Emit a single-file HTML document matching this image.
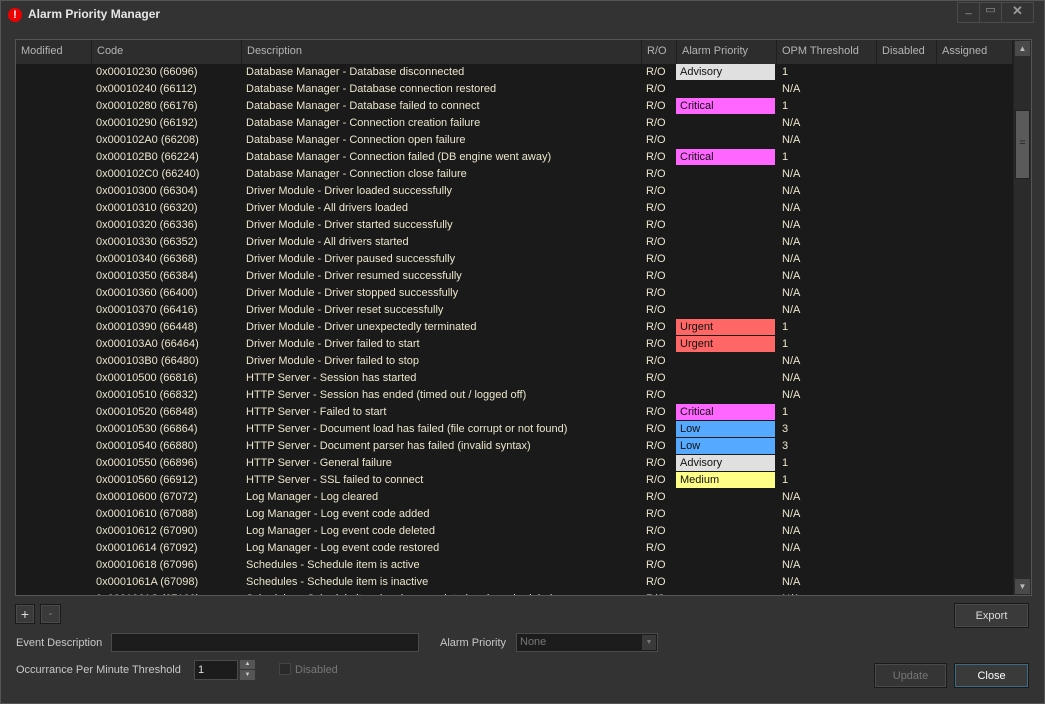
<!DOCTYPE html>
<html><head><meta charset="utf-8"><style>
*{margin:0;padding:0;box-sizing:border-box}
body{width:1045px;height:704px;background:#333;font-family:"Liberation Sans",sans-serif;font-size:11px;overflow:hidden;position:relative}
.win{position:absolute;left:0;top:0;width:1045px;height:704px;border:1px solid #555;background:#333}
.title{position:absolute;left:27px;top:6px;color:#e6e6e6;font-weight:bold;font-size:12px}
.ico{position:absolute;left:7px;top:7px;width:14px;height:14px;border-radius:50%;background:#e00;color:#fff;font-weight:bold;font-size:11px;text-align:center;line-height:14px}
.wb{position:absolute;top:1px;height:21px;border:1px solid #4a4a4a;color:#999;text-align:center}
.tbl{position:absolute;left:14px;top:38px;width:1017px;height:557px;border:1px solid #555;background:#1a1a1a;overflow:hidden}
.hdr{position:absolute;left:0;top:0;height:24px;width:997px;background:#2d2d2d}
.h{position:absolute;top:0;height:24px;line-height:22px;color:#b4b4b4;padding-left:5px;border-right:1px solid #1e1e1e}
.row{position:absolute;left:0;height:17px;width:997px;color:#ece6cc;line-height:17px}
.c{position:absolute;top:0;height:17px}
.p{position:absolute;left:660px;top:0;width:99px;height:16px;color:#111;padding-left:4px;line-height:16px}
.sb{position:absolute;left:997px;top:0;width:18px;height:555px;background:#2b2b2b;border-left:1px solid #222}
.btn{position:absolute;border:1px solid #1a1a1a;outline:1px solid #4a4a4a;outline-offset:-2px;background:#3a3a3a;color:#ddd;text-align:center}
.lbl{position:absolute;color:#c8c8c8}
</style></head><body><div class="win">
<div class="ico">!</div><div class="title">Alarm Priority Manager</div>
<div class="wb" style="left:956px;width:23px">_</div>
<div class="wb" style="left:978px;width:23px">▭</div>
<div class="wb" style="left:1000px;width:33px;font-weight:bold;font-size:13px">✕</div>
<div class="tbl">
<div class="hdr">
<div class="h" style="left:0;width:76px">Modified</div>
<div class="h" style="left:76px;width:150px">Code</div>
<div class="h" style="left:226px;width:400px">Description</div>
<div class="h" style="left:626px;width:35px">R/O</div>
<div class="h" style="left:661px;width:100px">Alarm Priority</div>
<div class="h" style="left:761px;width:100px">OPM Threshold</div>
<div class="h" style="left:861px;width:60px">Disabled</div>
<div class="h" style="left:921px;width:76px">Assigned</div>
</div>
<div id="rows"></div>
<div class="sb">
<div style="position:absolute;left:1px;top:1px;width:15px;height:15px;background:#4a4a4a;color:#bbb;font-size:8px;text-align:center;line-height:15px">▲</div>
<div style="position:absolute;left:1px;top:70px;width:15px;height:69px;background:#5a5a5a;border:1px solid #222;color:#222;text-align:center;line-height:64px">=</div>
<div style="position:absolute;left:1px;top:539px;width:15px;height:15px;background:#4a4a4a;color:#bbb;font-size:8px;text-align:center;line-height:15px">▼</div>
</div>
</div>
<div class="btn" style="left:14px;top:603px;width:20px;height:20px;line-height:18px;font-size:14px">+</div>
<div class="btn" style="left:39px;top:603px;width:21px;height:20px;line-height:18px;color:#888">-</div>
<div class="btn" style="left:953px;top:602px;width:75px;height:25px;line-height:25px">Export</div>
<div class="lbl" style="left:15px;top:636px">Event Description</div>
<div style="position:absolute;left:110px;top:632px;width:308px;height:19px;background:#1c1c1c;border:1px solid #4a4a4a"></div>
<div class="lbl" style="left:439px;top:636px">Alarm Priority</div>
<div style="position:absolute;left:515px;top:632px;width:142px;height:19px;background:#1c1c1c;border:1px solid #4a4a4a;color:#777;padding-left:3px;line-height:17px">None<div style="position:absolute;right:1px;top:1px;width:14px;height:15px;background:#3a3a3a;color:#777;font-size:7px;text-align:center;line-height:15px">▼</div></div>
<div class="lbl" style="left:15px;top:663px">Occurrance Per Minute Threshold</div>
<div style="position:absolute;left:193px;top:659px;width:44px;height:20px;background:#1c1c1c;border:1px solid #4a4a4a;color:#ddd;padding-left:3px;line-height:18px">1</div>
<div style="position:absolute;left:239px;top:659px;width:15px;height:9px;background:#555;color:#ccc;font-size:6px;text-align:center;line-height:9px">▲</div>
<div style="position:absolute;left:239px;top:669px;width:15px;height:10px;background:#555;color:#ccc;font-size:6px;text-align:center;line-height:10px">▼</div>
<div style="position:absolute;left:278px;top:662px;width:12px;height:12px;background:#2a2a2a;border:1px solid #444"></div>
<div class="lbl" style="left:294px;top:663px;color:#777">Disabled</div>
<div class="btn" style="left:873px;top:662px;width:73px;height:25px;line-height:25px;color:#777;background:#353535">Update</div>
<div class="btn" style="left:953px;top:662px;width:75px;height:25px;line-height:25px;color:#fff;outline-color:#3a6d85">Close</div>
</div>
<script>
var d=[["0x00010230 (66096)","Database Manager - Database disconnected","Advisory","1"],
["0x00010240 (66112)","Database Manager - Database connection restored","","N/A"],
["0x00010280 (66176)","Database Manager - Database failed to connect","Critical","1"],
["0x00010290 (66192)","Database Manager - Connection creation failure","","N/A"],
["0x000102A0 (66208)","Database Manager - Connection open failure","","N/A"],
["0x000102B0 (66224)","Database Manager - Connection failed (DB engine went away)","Critical","1"],
["0x000102C0 (66240)","Database Manager - Connection close failure","","N/A"],
["0x00010300 (66304)","Driver Module - Driver loaded successfully","","N/A"],
["0x00010310 (66320)","Driver Module - All drivers loaded","","N/A"],
["0x00010320 (66336)","Driver Module - Driver started successfully","","N/A"],
["0x00010330 (66352)","Driver Module - All drivers started","","N/A"],
["0x00010340 (66368)","Driver Module - Driver paused successfully","","N/A"],
["0x00010350 (66384)","Driver Module - Driver resumed successfully","","N/A"],
["0x00010360 (66400)","Driver Module - Driver stopped successfully","","N/A"],
["0x00010370 (66416)","Driver Module - Driver reset successfully","","N/A"],
["0x00010390 (66448)","Driver Module - Driver unexpectedly terminated","Urgent","1"],
["0x000103A0 (66464)","Driver Module - Driver failed to start","Urgent","1"],
["0x000103B0 (66480)","Driver Module - Driver failed to stop","","N/A"],
["0x00010500 (66816)","HTTP Server - Session has started","","N/A"],
["0x00010510 (66832)","HTTP Server - Session has ended (timed out / logged off)","","N/A"],
["0x00010520 (66848)","HTTP Server - Failed to start","Critical","1"],
["0x00010530 (66864)","HTTP Server - Document load has failed (file corrupt or not found)","Low","3"],
["0x00010540 (66880)","HTTP Server - Document parser has failed (invalid syntax)","Low","3"],
["0x00010550 (66896)","HTTP Server - General failure","Advisory","1"],
["0x00010560 (66912)","HTTP Server - SSL failed to connect","Medium","1"],
["0x00010600 (67072)","Log Manager - Log cleared","","N/A"],
["0x00010610 (67088)","Log Manager - Log event code added","","N/A"],
["0x00010612 (67090)","Log Manager - Log event code deleted","","N/A"],
["0x00010614 (67092)","Log Manager - Log event code restored","","N/A"],
["0x00010618 (67096)","Schedules - Schedule item is active","","N/A"],
["0x0001061A (67098)","Schedules - Schedule item is inactive","","N/A"],
["0x0001061C (67100)","Schedules - Schedule item has been updated and rescheduled","","N/A"]];
var col={Advisory:"#e0e0e0",Critical:"#ff66ff",Urgent:"#ff6666",Low:"#55aaff",Medium:"#ffff88"};
var h="";d.forEach(function(r,i){h+='<div class="row" style="top:'+(24+i*17)+'px"><div class="c" style="left:80px">'+r[0]+'</div><div class="c" style="left:230px">'+r[1]+'</div><div class="c" style="left:630px">R/O</div>'+(r[2]?'<div class="p" style="background:'+col[r[2]]+'">'+r[2]+'</div>':'')+'<div class="c" style="left:766px">'+r[3]+'</div></div>'});
document.getElementById("rows").innerHTML=h;
</script>
</body></html>
